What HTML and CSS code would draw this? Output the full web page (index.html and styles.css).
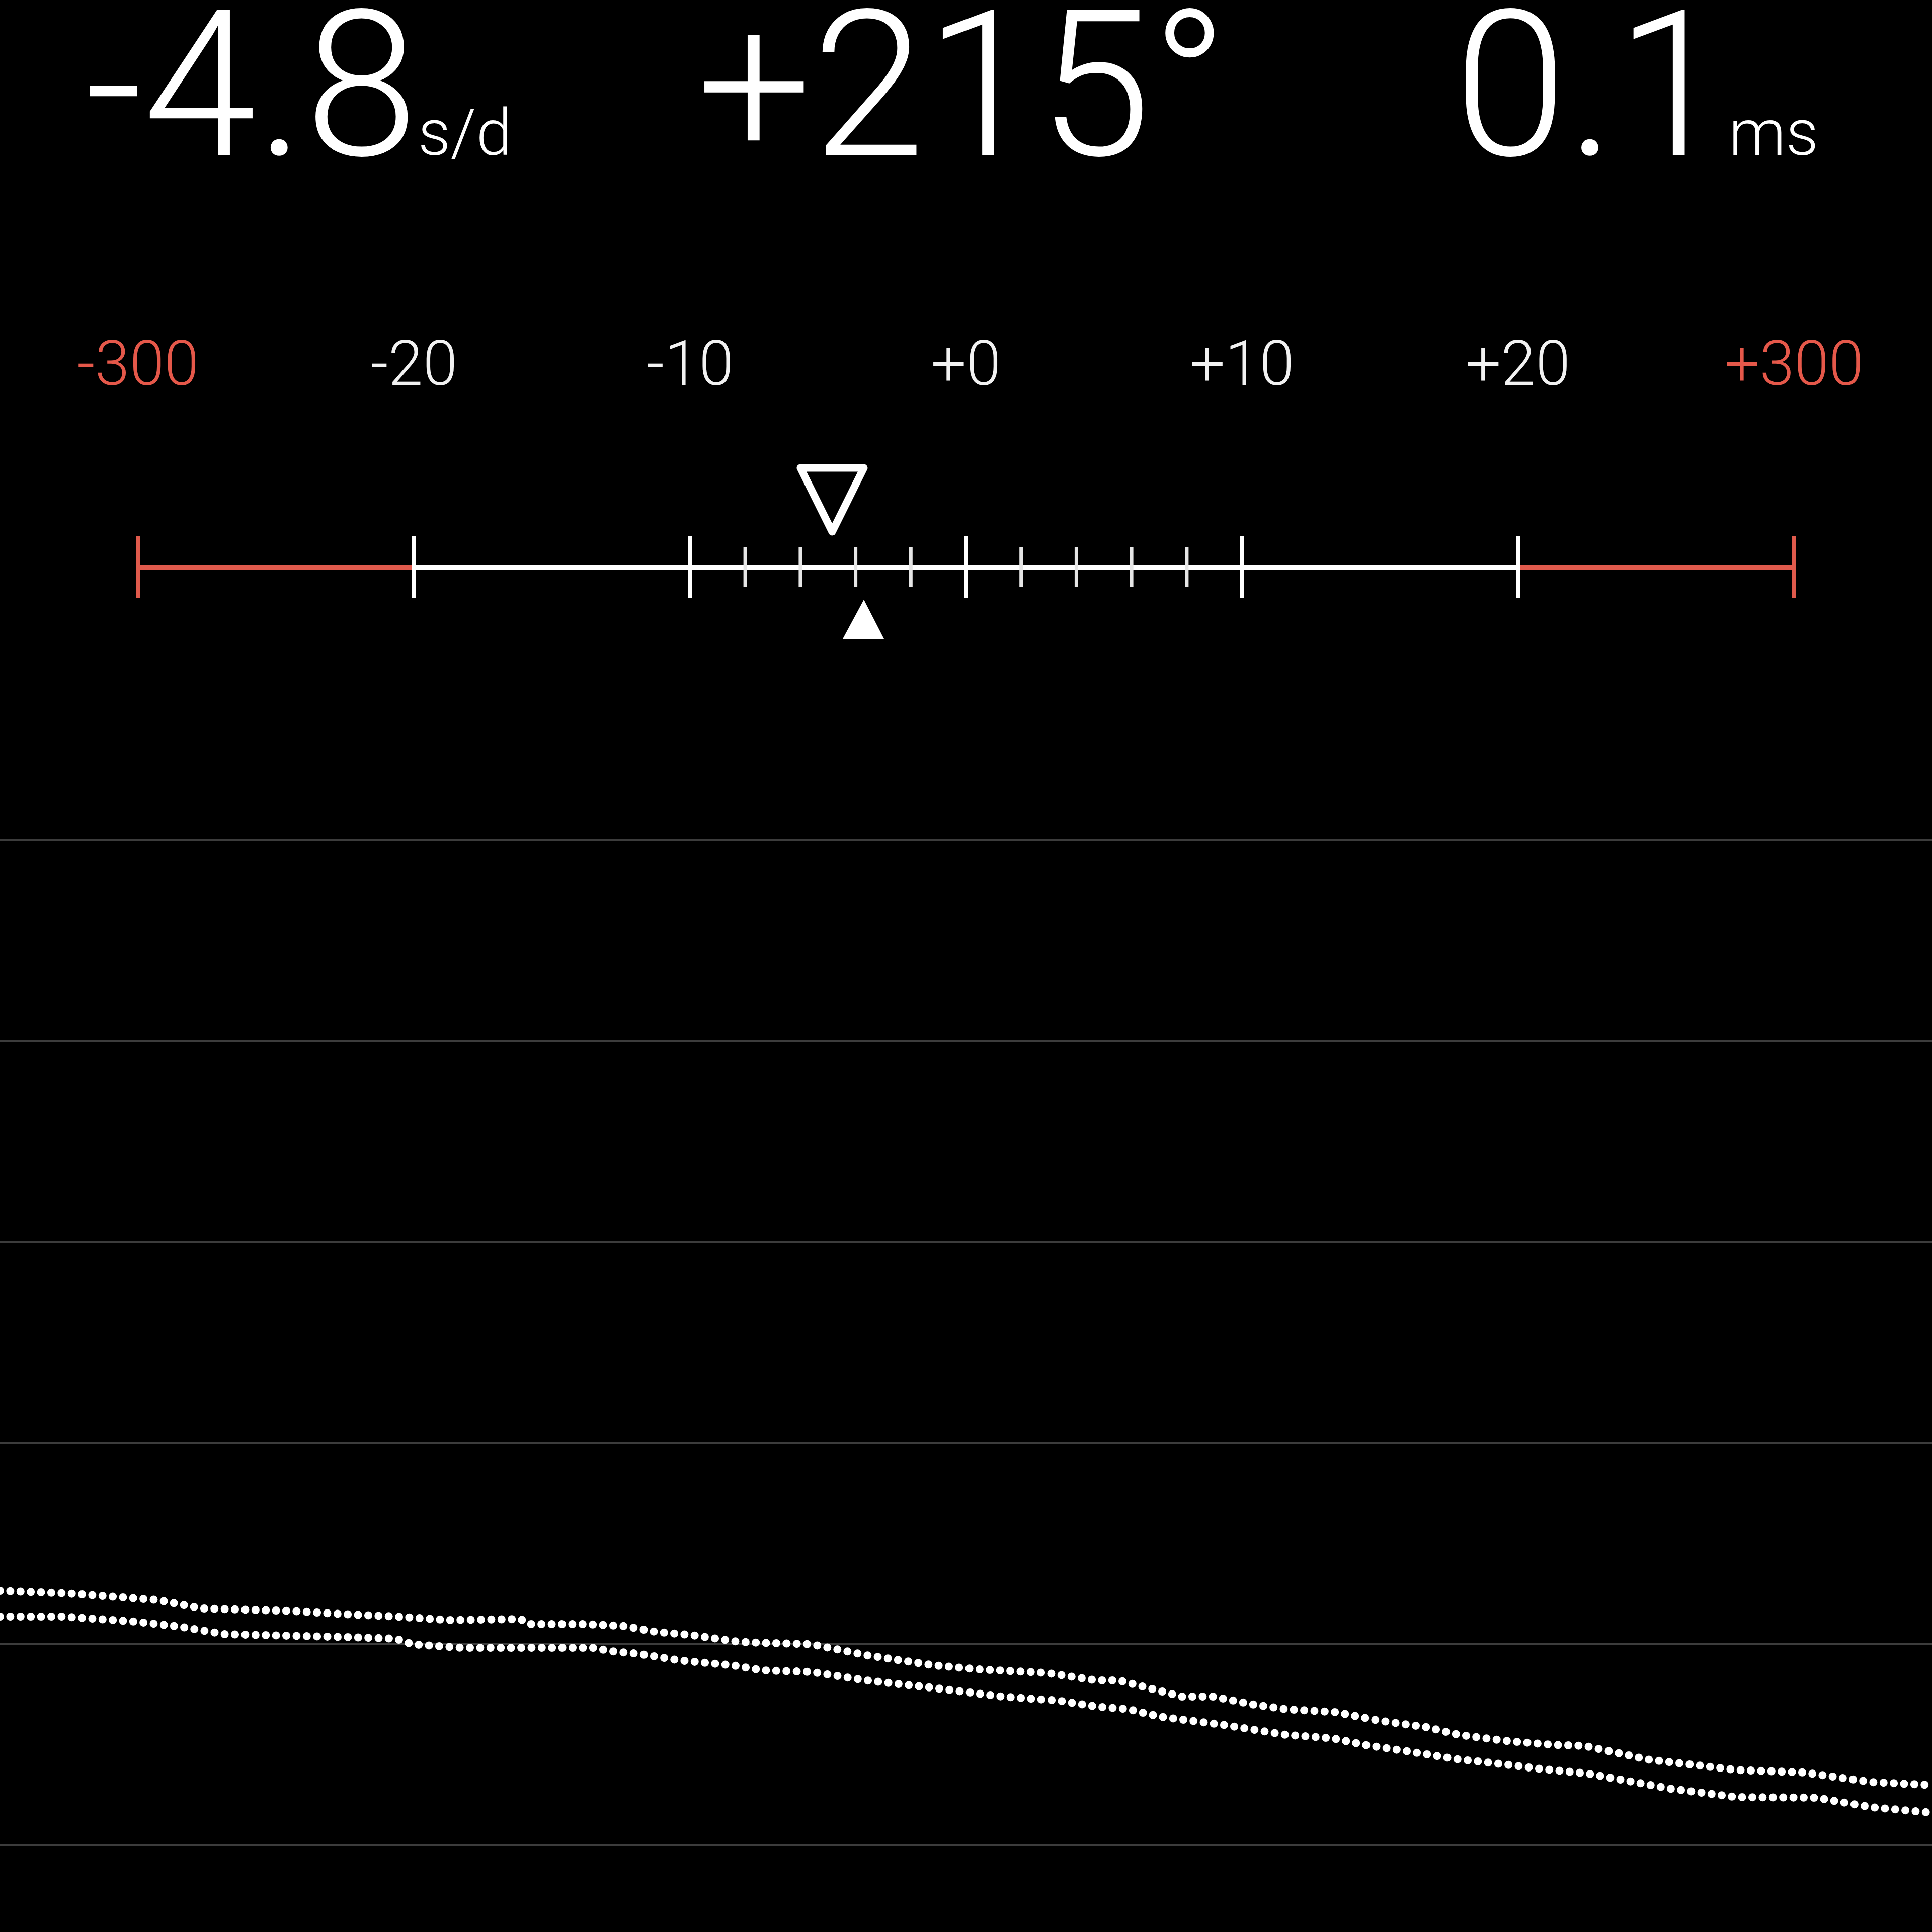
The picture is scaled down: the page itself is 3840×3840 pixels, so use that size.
FILE: index.html
```html
<!DOCTYPE html>
<html lang="en">
<head>
    <meta charset="UTF-8">
    <meta name="viewport" content="width=device-width, initial-scale=1.0">
    <title>Timegrapher</title>
    <link rel="stylesheet" href="styles.css">
</head>
<body>
    <section class="readouts">
        <div class="readout">
            <span class="value">-4.8</span><span class="unit">s/d</span>
        </div>
        <div class="readout">
            <span class="value">+215°</span>
        </div>
        <div class="readout readout-beat">
            <span class="value">0.1</span><span class="unit">ms</span>
        </div>
    </section>

    <div class="scale-labels">
        <span class="label label-out">-300</span>
        <span class="label">-20</span>
        <span class="label">-10</span>
        <span class="label">+0</span>
        <span class="label">+10</span>
        <span class="label">+20</span>
        <span class="label label-out">+300</span>
    </div>

    <!-- rate scale, y offset 900 -->
    <svg class="scale" width="3840" height="400" viewBox="0 0 3840 400">
        <line class="track-out" x1="274.3" y1="227" x2="822.9" y2="227" />
        <line class="track" x1="822.9" y1="227" x2="3017.1" y2="227" />
        <line class="track-out" x1="3017.1" y1="227" x2="3565.7" y2="227" />

        <line class="tick-out" x1="274.3" y1="165" x2="274.3" y2="288" />
        <line class="tick" x1="822.9" y1="165" x2="822.9" y2="288" />
        <line class="tick" x1="1371.4" y1="165" x2="1371.4" y2="288" />
        <line class="tick" x1="1920" y1="165" x2="1920" y2="288" />
        <line class="tick" x1="2468.6" y1="165" x2="2468.6" y2="288" />
        <line class="tick" x1="3017.1" y1="165" x2="3017.1" y2="288" />
        <line class="tick-out" x1="3565.7" y1="165" x2="3565.7" y2="288" />

        <line class="tick-minor" x1="1481.1" y1="187" x2="1481.1" y2="267" />
        <line class="tick-minor" x1="1590.9" y1="187" x2="1590.9" y2="267" />
        <line class="tick-minor" x1="1700.6" y1="187" x2="1700.6" y2="267" />
        <line class="tick-minor" x1="1810.3" y1="187" x2="1810.3" y2="267" />
        <line class="tick-minor" x1="2029.7" y1="187" x2="2029.7" y2="267" />
        <line class="tick-minor" x1="2139.4" y1="187" x2="2139.4" y2="267" />
        <line class="tick-minor" x1="2249.1" y1="187" x2="2249.1" y2="267" />
        <line class="tick-minor" x1="2358.9" y1="187" x2="2358.9" y2="267" />

        <polygon class="marker-avg" points="1591,30 1717,30 1654,157" />
        <polygon class="marker-now" points="1675,370 1757,370 1717,292" />
    </svg>

    <div class="chart">
        <div class="grid-row"></div>
        <div class="grid-row"></div>
        <div class="grid-row"></div>
        <div class="grid-row"></div>
        <div class="grid-row"></div>
        <div class="grid-row"></div>

        <svg class="trace" width="3840" height="2540" viewBox="0 1300 3840 2540">
            <polyline class="dots" points="0,3162 134,3167 312,3180 402,3197 580,3202 680,3208 787,3213 894,3220 1034,3218 1055,3228 1162,3228 1242,3232 1301,3243 1376,3250 1467,3263 1508,3265 1612,3268 1723,3290 1857,3310 1946,3318 2080,3325 2180,3340 2224,3340 2349,3372 2411,3372 2492,3388 2555,3397 2655,3403 2742,3420 2836,3433 2899,3448 2992,3460 3086,3468 3149,3470 3274,3497 3452,3518 3586,3523 3720,3542 3840,3548" />
            <polyline class="dots" points="0,3213 125,3213 268,3223 357,3233 446,3248 696,3254 787,3257 819,3268 916,3275 1178,3275 1216,3282 1269,3287 1350,3300 1457,3310 1516,3320 1612,3323 1723,3340 1857,3355 1991,3372 2103,3380 2180,3392 2242,3397 2305,3412 2430,3428 2555,3448 2649,3455 2711,3468 2805,3482 2899,3497 2992,3507 3055,3515 3155,3525 3319,3555 3452,3572 3609,3573 3720,3592 3840,3603" />
        </svg>
    </div>
</body>
</html>
```

FILE: styles.css
```css
body {
    margin: 0;
    width: 3840px;
    height: 3840px;
    overflow: hidden;
    background: #000;
    color: #fff;
    font-family: Roboto, "Liberation Sans", sans-serif;
    font-weight: 300;
}
.readouts {
    display: grid;
    grid-template-columns: 1186px 1454px 1fr;
    height: 340px;
}
.readout {
    display: flex;
    justify-content: center;
    align-items: baseline;
}
.readout-beat {
    padding-left: 24px;
}
.value {
    font-size: 405px;
    line-height: 340px;
}
.unit {
    font-size: 128px;
    line-height: 1;
}
.scale-labels {
    display: grid;
    grid-template-columns: repeat(7, 1fr);
    margin-top: 321px;
    font-size: 124px;
    line-height: 124px;
    text-align: center;
    color: #f2f2f2;
}
.label-out {
    color: #e5584a;
}
.scale {
    display: block;
    margin-top: 115px;
}
.track, .tick {
    stroke: #fff;
}
.track, .track-out {
    stroke-width: 10;
}
.track-out, .tick-out {
    stroke: #e05a4c;
}
.tick, .tick-out {
    stroke-width: 8;
}
.tick-minor {
    stroke: #e6e6e6;
    stroke-width: 7;
}
.marker-avg {
    fill: none;
    stroke: #fff;
    stroke-width: 15;
    stroke-linejoin: round;
}
.marker-now {
    fill: #fff;
}
.chart {
    position: relative;
    padding-top: 368px;
}
.grid-row {
    height: 395.6px;
    border-top: 4px solid #3c3c3c;
}
.grid-row:last-of-type {
    height: 168px;
}
.trace {
    position: absolute;
    top: 0;
    left: 0;
}
.dots {
    fill: none;
    stroke: #fff;
    stroke-width: 16;
    stroke-linecap: round;
    stroke-dasharray: 0 20.4;
}
```
